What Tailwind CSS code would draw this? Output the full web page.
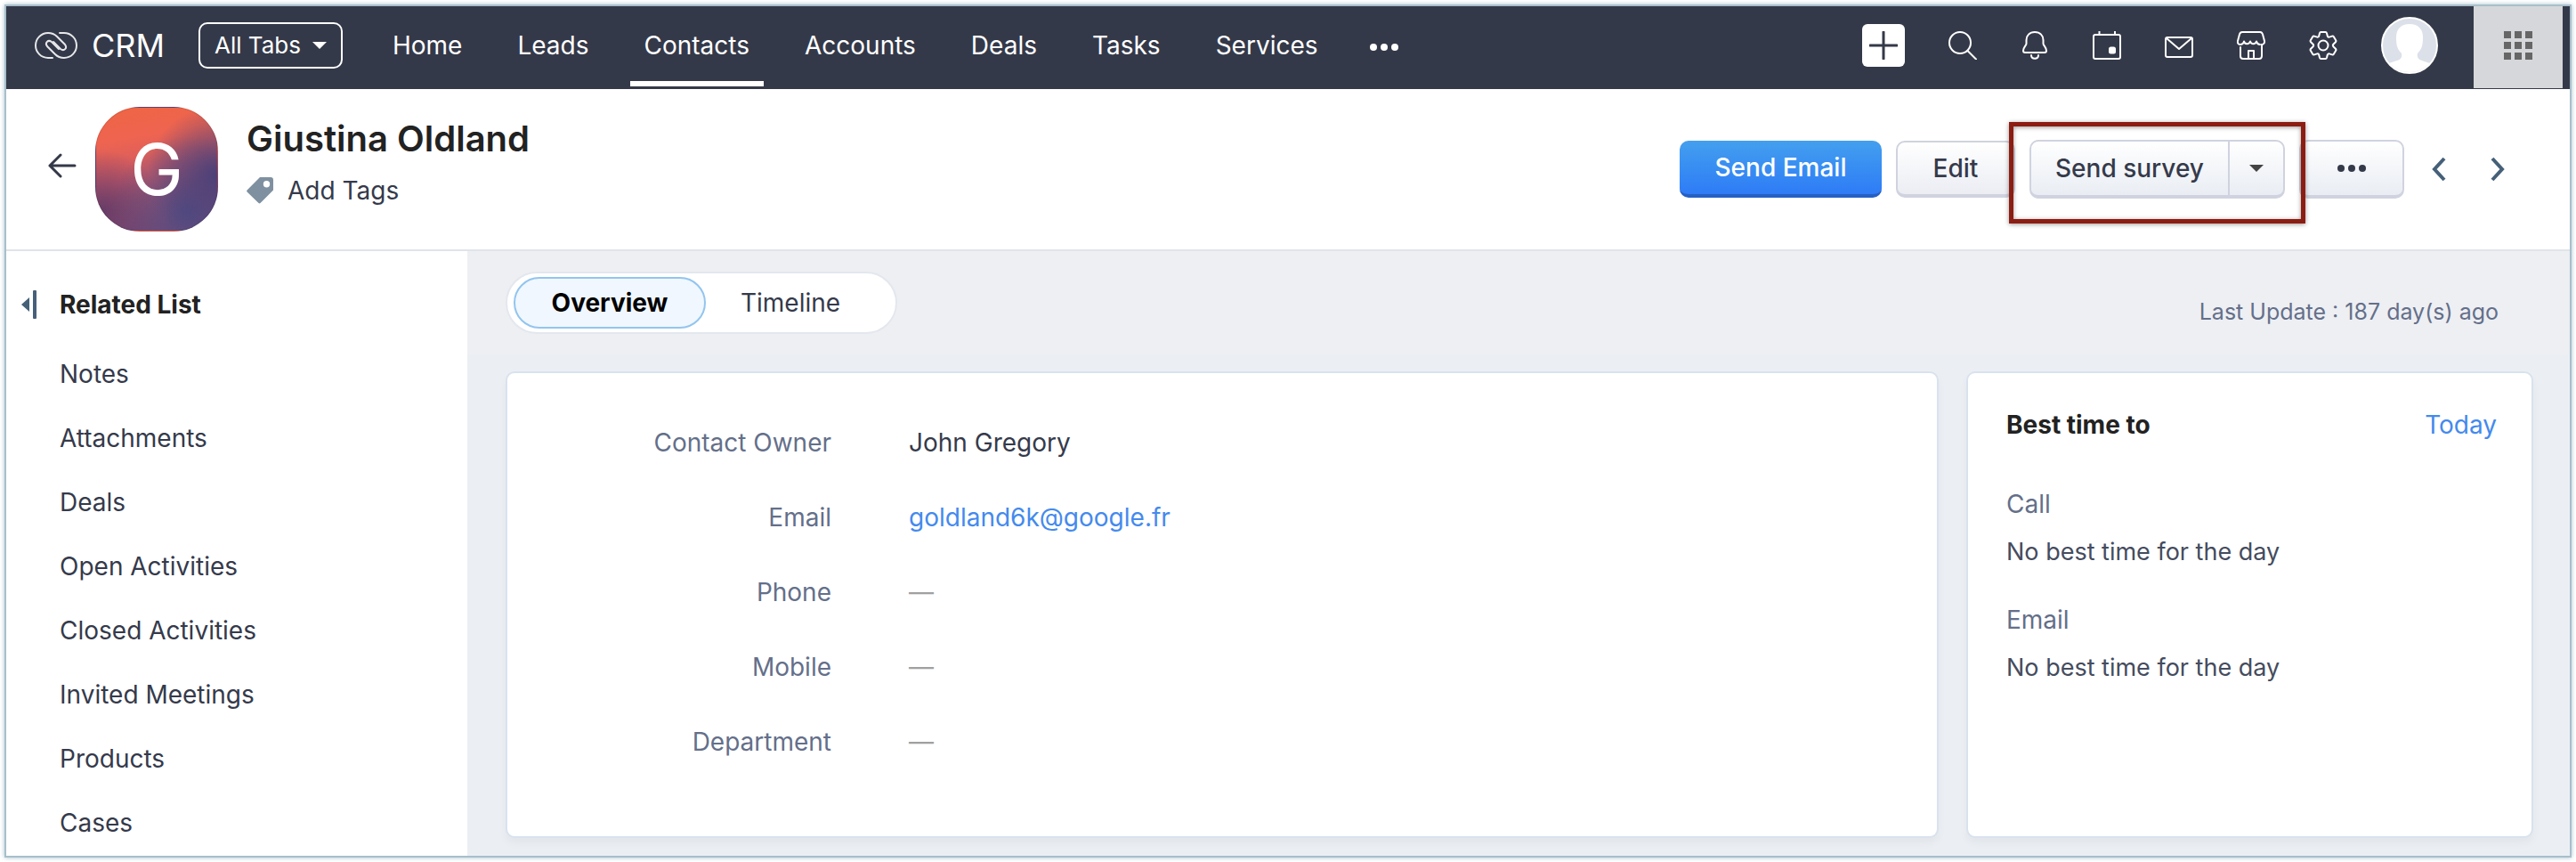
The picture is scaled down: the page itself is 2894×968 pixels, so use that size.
<!DOCTYPE html>
<html lang="en">
<head>
    <meta charset="UTF-8">
    <meta name="viewport" content="width=device-width, initial-scale=1.0">
    <title>Giustina Oldland - CRM</title>
    <!-- TailwindCSS -->
    <script src="https://cdn.jsdelivr.net/npm/@tailwindcss/browser@4"></script>
</head>
<body class="flex min-h-screen flex-col bg-white p-[5px] font-['Inter',sans-serif] text-[28px] leading-9 text-[#353a4b]">
    <div class="flex flex-1 flex-col border-2 border-[#a8bfcb] shadow-[0_0_5px_#a8bfcb]">

        <!-- Top bar -->
        <header class="flex h-[93px] items-center bg-[#343949] pr-2 pb-[5px] pl-8 text-white">
            <a href="#" class="flex items-center gap-4">
                <svg class="h-8 w-12" viewBox="0 0 48 32" fill="none" stroke="#e6e7ea" stroke-width="2" stroke-linecap="round">
                    <path d="M20 30h-5a14 14 0 0 1 0-28c4 0 7 1 10 4l9 9c3 4-1 8-5 5l-8-8"/>
                    <path d="M28 2h5a14 14 0 0 1 0 28c-4 0-7-1-10-4l-9-9c-3-4 1-8 5-5l8 8"/>
                </svg>
                <span class="text-[36px]">CRM</span>
            </a>
            <button class="ml-[38px] flex h-[52px] w-[162px] items-center justify-between rounded-[10px] border-2 border-white px-4 text-[26px]">
                All Tabs
                <svg class="h-2 w-4" viewBox="0 0 16 8" fill="currentColor"><path d="M0 0h16l-8 8z"/></svg>
            </button>
            <nav class="ml-10 flex h-full items-center gap-[30px]">
                <a href="#" class="px-4">Home</a>
                <a href="#" class="px-4">Leads</a>
                <a href="#" class="relative flex h-full items-center px-4">Contacts<span class="absolute inset-x-0 -bottom-0.5 h-1.5 bg-white"></span></a>
                <a href="#" class="px-4">Accounts</a>
                <a href="#" class="px-4">Deals</a>
                <a href="#" class="px-4">Tasks</a>
                <a href="#" class="px-4">Services</a>
                <button class="px-3 pt-1" aria-label="More tabs">
                    <svg class="h-2 w-8" viewBox="0 0 32 8" fill="currentColor"><circle cx="4" cy="4" r="4"/><circle cx="16" cy="4" r="4"/><circle cx="28" cy="4" r="4"/></svg>
                </button>
            </nav>
            <div class="ml-auto flex h-full items-center gap-[49px]">
                <button class="flex size-12 items-center justify-center rounded-md bg-white" aria-label="Create">
                    <svg class="size-8" viewBox="0 0 32 32" stroke="#343949" stroke-width="3" stroke-linecap="round"><path d="M16 1v30M1 16h30"/></svg>
                </button>
                <button aria-label="Search">
                    <svg class="size-8" viewBox="0 0 32 32" fill="none" stroke="currentColor" stroke-width="2" stroke-linecap="round"><circle cx="13" cy="13" r="12"/><path d="M21.500 22l9.500 9.500"/></svg>
                </button>
                <button aria-label="Notifications">
                    <svg class="size-8" viewBox="0 0 32 32" fill="none" stroke="currentColor" stroke-width="2" stroke-linecap="round" stroke-linejoin="round"><path d="M16 1c-6 0-9.500 4-9.500 9v4c0 2-3.500 4-3.500 8 0 1.500 1 2 2 2h22c1 0 2-.5 2-2 0-4-3.500-6-3.500-8v-4c0-5-3.500-9-9.500-9z"/><path d="M12 27c0 5 8 5 8 0"/></svg>
                </button>
                <button aria-label="Calendar">
                    <svg class="size-8" viewBox="0 0 32 32" fill="none" stroke="currentColor" stroke-width="2"><rect x="1" y="4" width="30" height="27" rx="2"/><path d="M7.500 0v4M25 0v4"/><rect x="18" y="17.500" width="8" height="8" rx="2.500" fill="currentColor" stroke="none"/></svg>
                </button>
                <button aria-label="Mail">
                    <svg class="size-8" viewBox="0 0 32 32" fill="none" stroke="currentColor" stroke-width="2" stroke-linejoin="round"><rect x="1" y="7" width="30" height="22" rx="2"/><path d="M2 8l14 12L30 8"/></svg>
                </button>
                <button aria-label="Marketplace">
                    <svg class="size-8" viewBox="0 0 32 32" fill="none" stroke="currentColor" stroke-width="2" stroke-linecap="round" stroke-linejoin="round"><path d="M6 1h20c1.500 0 2.500 1 3 2.500l2 7.500c.5 2-1 4-3 4M6 1C4.500 1 3.500 2 3 3.500L1 11c-.5 2 .5 4 2.500 4 2.500 0 4-1.500 4.500-3.500.5 3.500 6 3.500 7 0 1 3.500 6 3.500 7 0 .5 2 1.500 3.500 4 3.500"/><path d="M4 18v10c0 1.500 1 3 3 3h18c2 0 3-1.500 3-3V15M13 30v-8h6v8"/></svg>
                </button>
                <button aria-label="Settings">
                    <svg class="size-8" viewBox="0 0 32 32" fill="none" stroke="currentColor" stroke-width="2" stroke-linejoin="round"><path d="M13.500 1h5c.8 0 1.300.5 1.500 1.200l.8 3.300c.2.800 1.200 1.300 2 1.100l3.200-1c.8-.2 1.400 0 1.800.7l2.400 4c.4.700.3 1.300-.3 1.900L27.600 14.500c-.8.800-.8 2.200 0 3l2.300 2.300c.6.600.7 1.200.3 1.900l-2.400 4c-.4.700-1 .9-1.800.7l-3.200-1c-.8-.2-1.800.3-2 1.100l-.8 3.300c-.2.700-.7 1.200-1.500 1.200h-5c-.8 0-1.300-.5-1.500-1.200l-.8-3.300c-.2-.8-1.200-1.300-2-1.100l-3.200 1c-.8.200-1.400 0-1.800-.7l-2.400-4c-.4-.7-.3-1.300.3-1.900l2.300-2.300c.8-.8.800-2.200 0-3l-2.300-2.300c-.6-.6-.7-1.200-.3-1.900l2.400-4c.4-.7 1-.9 1.800-.7l3.200 1c.8.200 1.800-.3 2-1.100l.8-3.300C12.200 1.500 12.700 1 13.500 1z"/><circle cx="16" cy="16" r="5.500"/></svg>
                </button>
                <button class="size-16 overflow-hidden rounded-full border-2 border-white bg-[#dce0e9]" aria-label="Profile">
                    <svg class="size-full" viewBox="0 0 60 60" fill="#fff"><path d="M30 6c-10 0-15 6-15 15 0 8 1 13 6 18 1 4-1 7-5 8C10 49 6 50 4 51v9h52v-9c-2-1-7-2-12-4-4-1-6-4-5-8 5-5 6-10 6-18 0-9-5-15-15-15z"/></svg>
                </button>
            </div>
            <button class="ml-10 flex h-[92px] w-[100px] items-center justify-center self-start bg-[#d6d7da] pb-1" aria-label="Apps">
                <svg class="size-8" viewBox="0 0 32 32" fill="#666"><path d="M0 0h8v8H0zM12 0h8v8h-8zM24 0h8v8h-8zM0 12h8v8H0zM12 12h8v8h-8zM24 12h8v8h-8zM0 24h8v8H0zM12 24h8v8h-8zM24 24h8v8h-8z"/></svg>
            </button>
        </header>

        <!-- Record header -->
        <section class="flex h-[182px] items-center border-b-2 border-[#dfe4ea] pr-[72px] pl-[47px]">
            <button class="pb-2" aria-label="Back">
                <svg class="h-7 w-8" viewBox="0 0 32 28" fill="none" stroke="#343949" stroke-width="3" stroke-linecap="round" stroke-linejoin="round"><path d="M30 14H2M14 2L2 14l12 12"/></svg>
            </button>
            <div class="ml-[21px] flex h-[140px] w-[138px] items-center justify-center rounded-[50px] border border-black/10 bg-[radial-gradient(circle_at_100%_55%,#4a4078_0%,#4a407800_50%),radial-gradient(circle_at_75%_85%,#514c82_0%,#514c8200_55%),radial-gradient(circle_at_5%_85%,#663c68_0%,#663c6800_40%),linear-gradient(170deg,#ee6544_0%,#ee6450_25%,#cc5a66_55%,#8a4a70_90%)] text-[80px] text-white">G</div>
            <div class="ml-8 flex flex-col gap-4 pb-4">
                <h1 class="text-[40px] leading-[48px] font-semibold text-[#222]">Giustina Oldland</h1>
                <button class="flex items-center gap-4">
                    <svg class="size-[30px]" viewBox="0 0 30 30" fill="#7f90a0"><path fill-rule="evenodd" d="M15 0h12a3 3 0 0 1 3 3v11.500L15.500 29a1.500 1.500 0 0 1-2 0L.6 16.500a1.500 1.500 0 0 1 0-2zM22.500 4a3.700 3.700 0 1 0 0 7.400 3.700 3.700 0 0 0 0-7.400z"/></svg>
                    Add Tags
                </button>
            </div>
            <div class="ml-auto flex items-center gap-4 font-medium">
                <button class="h-16 w-[227px] rounded-[10px] border-b-4 border-[#2560c4] bg-linear-to-b from-[#449fee] to-[#2f7bf6] text-white">Send Email</button>
                <button class="h-16 w-[134px] rounded-[10px] border-2 border-b-4 border-[#d0d3df] bg-linear-to-b from-white to-[#ebedf3]">Edit</button>
                <div class="relative flex h-[66px] w-[287px] rounded-[10px] border-2 border-b-4 border-[#d0d3df] bg-linear-to-b from-white to-[#e9edf3]">
                    <button class="flex-1">Send survey</button>
                    <button class="flex w-[62px] items-center justify-center border-l-2 border-[#d0d3df]" aria-label="Survey options">
                        <svg class="h-2 w-4" viewBox="0 0 16 8" fill="#444"><path d="M0 0h16l-8 8z"/></svg>
                    </button>
                    <!-- Highlight box -->
                    <div class="pointer-events-none absolute -inset-x-[25px] -top-[22px] -bottom-8 z-10 border-5 border-[#8c1d13] shadow-[0_1px_5px_#0006,inset_0_1px_5px_#0006]"></div>
                </div>
                <button class="flex h-[66px] w-[118px] items-center justify-center rounded-[10px] border-2 border-b-4 border-[#d0d3df] bg-linear-to-b from-white to-[#e9edf3]" aria-label="More actions">
                    <svg class="h-2 w-8" viewBox="0 0 32 8" fill="currentColor"><circle cx="4" cy="4" r="4"/><circle cx="16" cy="4" r="4"/><circle cx="28" cy="4" r="4"/></svg>
                </button>
                <div class="ml-3.5 flex gap-12 text-[#456078]">
                    <button aria-label="Previous record"><svg class="h-7 w-[18px]" viewBox="0 0 18 28" fill="none" stroke="currentColor" stroke-width="4"><path d="M15 2L4 14l11 12"/></svg></button>
                    <button aria-label="Next record"><svg class="h-7 w-[18px]" viewBox="0 0 18 28" fill="none" stroke="currentColor" stroke-width="4"><path d="M3 2l11 12L3 26"/></svg></button>
                </div>
            </div>
        </section>

        <div class="flex flex-1">
            <!-- Related list -->
            <aside class="w-[518px] shrink-0 pt-[42px]">
                <div class="mb-6 flex items-center gap-[26px] pl-[17px]">
                    <svg class="h-8 w-[17px]" viewBox="0 0 17 32" fill="#456078"><path d="M9 8v16L0 16z"/><rect x="13" width="4" height="32" rx="1"/></svg>
                    <h2 class="font-bold text-[#222]">Related List</h2>
                </div>
                <ul class="pl-[60px] leading-[72px]">
                    <li><a href="#">Notes</a></li>
                    <li><a href="#">Attachments</a></li>
                    <li><a href="#">Deals</a></li>
                    <li><a href="#">Open Activities</a></li>
                    <li><a href="#">Closed Activities</a></li>
                    <li><a href="#">Invited Meetings</a></li>
                    <li><a href="#">Products</a></li>
                    <li><a href="#">Cases</a></li>
                </ul>
            </aside>

            <main class="flex flex-1 flex-col bg-[#ebeff4]">
                <div class="flex h-[116px] items-center justify-between bg-[#eeeff3] pr-20 pl-[43px]">
                    <div class="flex h-[70px] w-[440px] items-center rounded-full border-2 border-[#e3e7ee] bg-white px-[7px]">
                        <button class="h-[58px] w-[216px] rounded-full border-2 border-[#93c5ee] bg-[#f0f7ff] font-bold text-black">Overview</button>
                        <button class="flex-1 pr-4">Timeline</button>
                    </div>
                    <p class="mt-5 text-[25px] text-[#646f8a]">Last Update : 187 day(s) ago</p>
                </div>

                <div class="flex flex-1 gap-[31px] pt-[19px] pr-[41px] pb-5 pl-[43px]">
                    <!-- Contact details -->
                    <section class="flex-1 rounded-[10px] border-2 border-[#d9e2ee] bg-white pt-[60px] shadow-[0_6px_10px_#0000000a]">
                        <dl class="grid grid-cols-[364px_1fr] gap-x-[87px] gap-y-12">
                            <dt class="text-right text-[#646f8a]">Contact Owner</dt>
                            <dd>John Gregory</dd>
                            <dt class="text-right text-[#646f8a]">Email</dt>
                            <dd><a href="mailto:goldland6k@google.fr" class="text-[#448aed]">goldland6k@google.fr</a></dd>
                            <dt class="text-right text-[#646f8a]">Phone</dt>
                            <dd class="text-[#a0a0a0]">—</dd>
                            <dt class="text-right text-[#646f8a]">Mobile</dt>
                            <dd class="text-[#a0a0a0]">—</dd>
                            <dt class="text-right text-[#646f8a]">Department</dt>
                            <dd class="text-[#a0a0a0]">—</dd>
                        </dl>
                    </section>

                    <!-- Best time to contact -->
                    <section class="w-[637px] rounded-[10px] border-2 border-[#d9e2ee] bg-white pt-10 pr-[39px] pl-[43px] shadow-[0_6px_10px_#0000000a]">
                        <div class="flex items-center justify-between">
                            <h2 class="font-bold text-[#222]">Best time to</h2>
                            <a href="#" class="text-[#448aed]">Today</a>
                        </div>
                        <h3 class="mt-[53px] text-[#646f8a]">Call</h3>
                        <p class="mt-[18px] text-[27px] text-[#454c5e]">No best time for the day</p>
                        <h3 class="mt-10 text-[#646f8a]">Email</h3>
                        <p class="mt-[18px] text-[27px] text-[#454c5e]">No best time for the day</p>
                    </section>
                </div>
            </main>
        </div>
    </div>
</body>
</html>
